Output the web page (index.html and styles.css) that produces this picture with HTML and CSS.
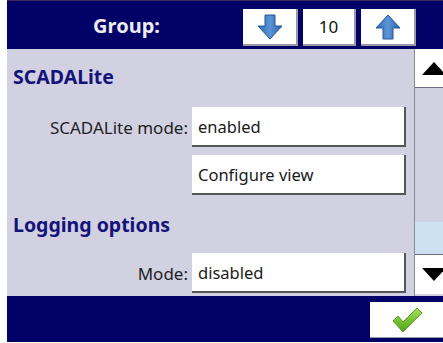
FILE: index.html
```html
<!DOCTYPE html>
<html>
<head>
<meta charset="utf-8">
<link rel="stylesheet" href="styles.css">
</head>
<body>
<div class="app">
  <div class="topbar">
    <div class="group-label">Group:</div>
    <div class="group-ctrl">
      <div class="tbtn">
        <svg width="28" height="28" viewBox="0 0 28 28">
          <defs>
            <linearGradient id="ga" x1="0" y1="0" x2="1" y2="0">
              <stop offset="0" stop-color="#2d6bb5"/>
              <stop offset="0.5" stop-color="#5b95d6"/>
              <stop offset="1" stop-color="#2c62a8"/>
            </linearGradient>
          </defs>
          <path d="M9 2 H19 V13 H26 L14 26 L2 13 H9 Z" fill="url(#ga)" stroke="#24569a" stroke-width="1"/>
        </svg>
      </div>
      <div class="tnum">10</div>
      <div class="tbtn">
        <svg width="28" height="28" viewBox="0 0 28 28">
          <path d="M9 26 H19 V15 H26 L14 2 L2 15 H9 Z" fill="url(#ga)" stroke="#24569a" stroke-width="1"/>
        </svg>
      </div>
    </div>
  </div>
  <div class="main">
    <div class="content">
      <div class="heading">SCADALite</div>
      <div class="row gap">
        <div class="label">SCADALite mode:</div>
        <div class="field">enabled</div>
      </div>
      <div class="row">
        <div class="label"></div>
        <div class="field">Configure view</div>
      </div>
      <div class="heading h2">Logging options</div>
      <div class="row">
        <div class="label">Mode:</div>
        <div class="field">disabled</div>
      </div>
    </div>
    <div class="scrollbar">
      <div class="sbtn up"><div class="tri-up"></div></div>
      <div class="track">
        <div class="thumb"></div>
      </div>
      <div class="sbtn down"><div class="tri-down"></div></div>
    </div>
  </div>
  <div class="bottombar">
    <div class="okbtn">
      <svg width="34" height="28" viewBox="0 0 34 28">
        <defs>
          <linearGradient id="gc" x1="0" y1="0" x2="0" y2="1">
            <stop offset="0" stop-color="#a6e05a"/>
            <stop offset="1" stop-color="#4fa319"/>
          </linearGradient>
        </defs>
        <path d="M3 15 L8 10 L13 16 L27 2 L32 7 L13 26 Z" fill="url(#gc)" stroke="#5a9e22" stroke-width="1" stroke-linejoin="round"/>
      </svg>
    </div>
  </div>
</div>
</body>
</html>
```
FILE: styles.css
```css
html, body {
  margin: 0;
  padding: 0;
  background: #ffffff;
}
body {
  width: 443px;
  height: 343px;
  overflow: hidden;
  font-family: "Noto Sans", "DejaVu Sans", sans-serif;
}
.app {
  margin-left: 7px;
  width: 436px;
  display: flex;
  flex-direction: column;
}
.topbar {
  height: 49px;
  box-sizing: border-box;
  background: #020168;
  border-top: 1px solid #3d2a5c;
  display: flex;
  align-items: center;
}
.group-label {
  width: 239px;
  text-align: center;
  color: #ececf2;
  font-weight: bold;
  font-size: 20px;
}
.group-ctrl {
  display: flex;
  gap: 5px;
  margin-top: 5px;
  margin-left: -3px;
}
.tbtn, .tnum {
  height: 37px;
  background: #ffffff;
  box-sizing: border-box;
  border-right: 2px solid #9a9aa6;
  border-bottom: 2px solid #9a9aa6;
  display: flex;
  align-items: center;
  justify-content: center;
}
.tbtn { width: 55px; }
.tnum {
  width: 53px;
  font-size: 17px;
  color: #111;
}
.main {
  height: 247px;
  display: flex;
  background: #d1d1e1;
}
.content {
  flex: 1;
  padding: 0 0 0 6px;
  display: flex;
  flex-direction: column;
}
.heading {
  color: #14137a;
  font-weight: bold;
  font-size: 19.5px;
  height: 58px;
  line-height: 56px;
}
.h2 { line-height: 60px; }
.row {
  display: flex;
  align-items: center;
  height: 40px;
}
.row.gap { margin-bottom: 8px; }
.label {
  width: 179px;
  box-sizing: border-box;
  text-align: right;
  padding-right: 4px;
  font-size: 17px;
  color: #222;
}
.field {
  width: 214px;
  height: 40px;
  box-sizing: border-box;
  background: #fff;
  border-right: 2px solid #555;
  border-bottom: 2px solid #555;
  padding-left: 6px;
  font-size: 16.5px;
  color: #1a1a1a;
  display: flex;
  align-items: center;
}
.scrollbar {
  width: 28px;
  border-left: 1px solid #8a8a96;
  display: flex;
  flex-direction: column;
  overflow: hidden;
  padding-bottom: 2px;
}
.sbtn {
  background: #fff;
  display: flex;
  align-items: center;
  padding-left: 7px;
}
.sbtn.up { height: 39px; border-bottom: 1px solid #6a6a80; box-sizing: border-box; }
.sbtn.down { height: 40px; border-top: 1px solid #6a6a80; box-sizing: border-box; }
.track {
  flex: 1;
  display: flex;
  flex-direction: column;
  justify-content: flex-end;
}
.thumb {
  height: 32px;
  background: #cde1f1;
}
.tri-up {
  width: 0; height: 0;
  flex: none;
  border-left: 12px solid transparent;
  border-right: 12px solid transparent;
  border-bottom: 13px solid #000;
}
.tri-down {
  width: 0; height: 0;
  flex: none;
  border-left: 12px solid transparent;
  border-right: 12px solid transparent;
  border-top: 13px solid #000;
}
.bottombar {
  height: 46px;
  background: #020168;
  display: flex;
  justify-content: flex-end;
  align-items: flex-start;
  padding-top: 6px;
  box-sizing: border-box;
}
.okbtn {
  width: 73px;
  height: 36px;
  box-sizing: border-box;
  background: #fff;
  border-bottom: 1px solid #9a9aa6;
  display: flex;
  align-items: center;
  justify-content: center;
}
```
